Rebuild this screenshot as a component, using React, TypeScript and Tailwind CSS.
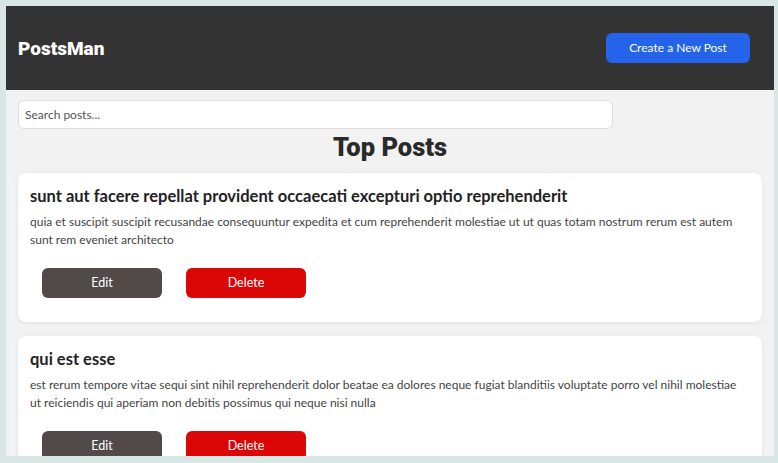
const posts = [
  {
    id: 1,
    title: "sunt aut facere repellat provident occaecati excepturi optio reprehenderit",
    body: "quia et suscipit suscipit recusandae consequuntur expedita et cum reprehenderit molestiae ut ut quas totam nostrum rerum est autem sunt rem eveniet architecto",
  },
  {
    id: 2,
    title: "qui est esse",
    body: "est rerum tempore vitae sequi sint nihil reprehenderit dolor beatae ea dolores neque fugiat blanditiis voluptate porro vel nihil molestiae ut reiciendis qui aperiam non debitis possimus qui neque nisi nulla",
  },
];

const App = () => {
  return (
    <div className="h-[463px] overflow-hidden bg-[#d8e7e4] pt-[6px] pl-[6px] pr-[4px] pb-[7px] font-['Lato',sans-serif]">
      <div className="h-full overflow-hidden bg-[#f2f2f2]">
        <header className="flex h-[84px] items-center justify-between bg-[#333333] pl-3 pr-6">
          <h1 className="mt-[2px] font-['Roboto',sans-serif] text-[19px] font-black text-white">PostsMan</h1>
          <button className="h-[30px] w-[144px] rounded-md bg-[#2563eb] text-[12px] text-white">
            Create a New Post
          </button>
        </header>
        <main className="px-3">
          <input
            placeholder="Search posts..."
            className="mt-[10px] h-[29px] w-4/5 rounded-md border border-[#dddddd] bg-white px-[6px] text-[12px] text-[#333] placeholder:text-[#555]"
          />
          <h2 className="mt-[3px] mb-[10px] text-center font-['Roboto',sans-serif] text-[25.5px] font-black leading-[31px] text-[#2a2a2a]">
            Top Posts
          </h2>
          <div className="flex flex-col gap-[14px]">
            {posts.map((post) => (
              <div key={post.id} className="rounded-lg bg-white px-3 pt-[12px] pb-[24px] shadow-[0_1px_4px_rgba(0,0,0,0.08)]">
                <h3 className="text-[16.5px] font-bold leading-[22px] text-[#222]">{post.title}</h3>
                <p className="mt-[6px] text-[12px] leading-[18px] text-[#444]">{post.body}</p>
                <div className="mt-[19px] flex gap-6 px-3">
                  <button className="h-[30px] w-[120px] rounded-md bg-[#524a49] text-[12.5px] text-white">Edit</button>
                  <button className="h-[30px] w-[120px] rounded-md bg-[#db0606] text-[12.5px] text-white">Delete</button>
                </div>
              </div>
            ))}
          </div>
        </main>
      </div>
    </div>
  );
};

export default App;
